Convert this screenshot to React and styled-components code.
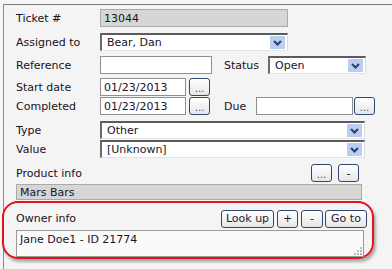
import React from 'react';
import styled, { createGlobalStyle } from 'styled-components';

const GlobalStyle = createGlobalStyle`
    html, body {
        margin: 0;
        padding: 0;
        background: #f6f6f6;
        overflow: hidden;
    }
    body {
        font-family: "DejaVu Sans", Verdana, sans-serif;
        font-size: 11px;
        color: #1a1020;
    }
`;

const Panel = styled.div`
    margin: 4px 0 0 3px;
    width: 389px;
    height: 265px;
    box-sizing: border-box;
    border-top: 1px solid #7a7a7a;
    border-left: 1px solid #8a8a8a;
    background: #f4f4f4;
    padding: 4px 0 0 12px;
`;

const Row = styled.div`
    display: flex;
    align-items: center;
    height: ${p => p.$h || 18}px;
    margin-top: ${p => p.$mt || 0}px;
`;

const Label = styled.div`
    width: ${p => p.$w || 84}px;
    margin-left: ${p => p.$ml || 0}px;
    flex: none;
    white-space: nowrap;
`;

const TextBox = styled.div`
    box-sizing: border-box;
    width: ${p => p.$w}px;
    height: ${p => p.$h || 18}px;
    margin-left: ${p => p.$ml || 0}px;
    border: 1px solid ${p => (p.$gray ? '#a9a9a9' : '#8f8f8f')};
    background: ${p => (p.$gray ? '#d6d6d6' : '#fff')};
    padding: 0 3px;
    display: flex;
    align-items: center;
    color: #15152a;
    white-space: nowrap;
    flex: none;
`;

const Select = styled.div`
    box-sizing: border-box;
    width: ${p => p.$w}px;
    height: 18px;
    margin-left: ${p => p.$ml || 0}px;
    border-top: 2px solid #5c5c5c;
    border-left: 2px solid #6a6a6a;
    border-right: 1px solid #dcdcdc;
    border-bottom: 1px solid #e4e4e4;
    background: #fff;
    display: flex;
    align-items: center;
    justify-content: space-between;
    padding: 0 2px 0 5px;
    flex: none;
    color: #15152a;
`;

const Arrow = styled.span`
    width: 15px;
    height: 13px;
    background: #bccdf2;
    display: flex;
    align-items: center;
    justify-content: center;
`;

const SmallButton = styled.div`
    box-sizing: border-box;
    width: ${p => p.$w || 21}px;
    height: 18px;
    margin-left: ${p => p.$ml || 0}px;
    border: 1px solid #2d4a72;
    border-radius: 3px;
    background: linear-gradient(#ffffff, #e6e6e6);
    display: flex;
    align-items: center;
    justify-content: center;
    color: #1c2430;
    font-size: 11px;
    line-height: 1;
    flex: none;
`;

const Dots = styled.span`
    color: #3a5a80;
    font-size: 10px;
    margin-top: 4px;
`;

const Spacer = styled.div`
    flex: 1;
`;

const OwnerSection = styled.div`
    position: relative;
    width: 351px;
    margin-top: 10px;

    &::before {
        content: '';
        position: absolute;
        left: -14px;
        top: -9px;
        right: -7px;
        bottom: -2px;
        border: 2px solid #e3121b;
        border-radius: 16px;
        box-shadow: 2px 3px 3px rgba(0, 0, 0, 0.3);
        pointer-events: none;
    }
`;

const TextArea = styled.div`
    position: relative;
    box-sizing: border-box;
    width: 348px;
    height: 27px;
    margin-top: 3px;
    border: 1px solid #9a9a9a;
    background: #fafafa;
    padding: 2px 3px;
    color: #15152a;
`;

const Grip = styled.svg`
    position: absolute;
    right: 1px;
    bottom: 1px;
`;

const Chevron = () => (
    <svg width="9" height="6" viewBox="0 0 9 6">
        <path d="M1 1 L4.5 4.5 L8 1" fill="none" stroke="#2a3f6e" strokeWidth="2" />
    </svg>
);

const DropDown = ({ value, w, ml }) => (
    <Select $w={w} $ml={ml}>
        <span>{value}</span>
        <Arrow><Chevron /></Arrow>
    </Select>
);

const DotsButton = ({ ml }) => (
    <SmallButton $ml={ml}><Dots>...</Dots></SmallButton>
);

const App = () => {
    return (
        <>
            <GlobalStyle />
            <Panel>
                <Row>
                    <Label>Ticket #</Label>
                    <TextBox $w={188} $gray>13044</TextBox>
                </Row>
                <Row $mt={6}>
                    <Label>Assigned to</Label>
                    <DropDown value="Bear, Dan" w={188} />
                </Row>
                <Row $mt={5}>
                    <Label>Reference</Label>
                    <TextBox $w={112} />
                    <Label $w={44} $ml={12}>Status</Label>
                    <DropDown value="Open" w={98} />
                </Row>
                <Row $mt={4}>
                    <Label>Start date</Label>
                    <TextBox $w={86}>01/23/2013</TextBox>
                    <DotsButton ml={3} />
                </Row>
                <Row $mt={1}>
                    <Label>Completed</Label>
                    <TextBox $w={86}>01/23/2013</TextBox>
                    <DotsButton ml={3} />
                    <Label $w={32} $ml={14}>Due</Label>
                    <TextBox $w={97} />
                    <DotsButton ml={1} />
                </Row>
                <Row $mt={6}>
                    <Label>Type</Label>
                    <DropDown value="Other" w={265} />
                </Row>
                <Row $mt={1}>
                    <Label>Value</Label>
                    <DropDown value="[Unknown]" w={265} />
                </Row>
                <Row $mt={6} style={{ width: 343 }}>
                    <Label>Product info</Label>
                    <Spacer />
                    <DotsButton />
                    <SmallButton $ml={6}>-</SmallButton>
                </Row>
                <Row $mt={2} $h={16}>
                    <TextBox $w={346} $h={16} $gray>Mars Bars</TextBox>
                </Row>
                <OwnerSection>
                    <Row $h={17}>
                        <Label>Owner info</Label>
                        <Spacer />
                        <SmallButton $w={53}>Look up</SmallButton>
                        <SmallButton $ml={3}>+</SmallButton>
                        <SmallButton $ml={3} $w={22}>-</SmallButton>
                        <SmallButton $ml={2} $w={42}>Go to</SmallButton>
                    </Row>
                    <TextArea>
                        Jane Doe1 - ID 21774
                        <Grip width="8" height="8" viewBox="0 0 8 8">
                            <g fill="#b8b8b8">
                                <rect x="6" y="0" width="2" height="2" />
                                <rect x="3" y="3" width="2" height="2" />
                                <rect x="6" y="3" width="2" height="2" />
                                <rect x="0" y="6" width="2" height="2" />
                                <rect x="3" y="6" width="2" height="2" />
                                <rect x="6" y="6" width="2" height="2" />
                            </g>
                        </Grip>
                    </TextArea>
                </OwnerSection>
            </Panel>
        </>
    );
};

export default App;
